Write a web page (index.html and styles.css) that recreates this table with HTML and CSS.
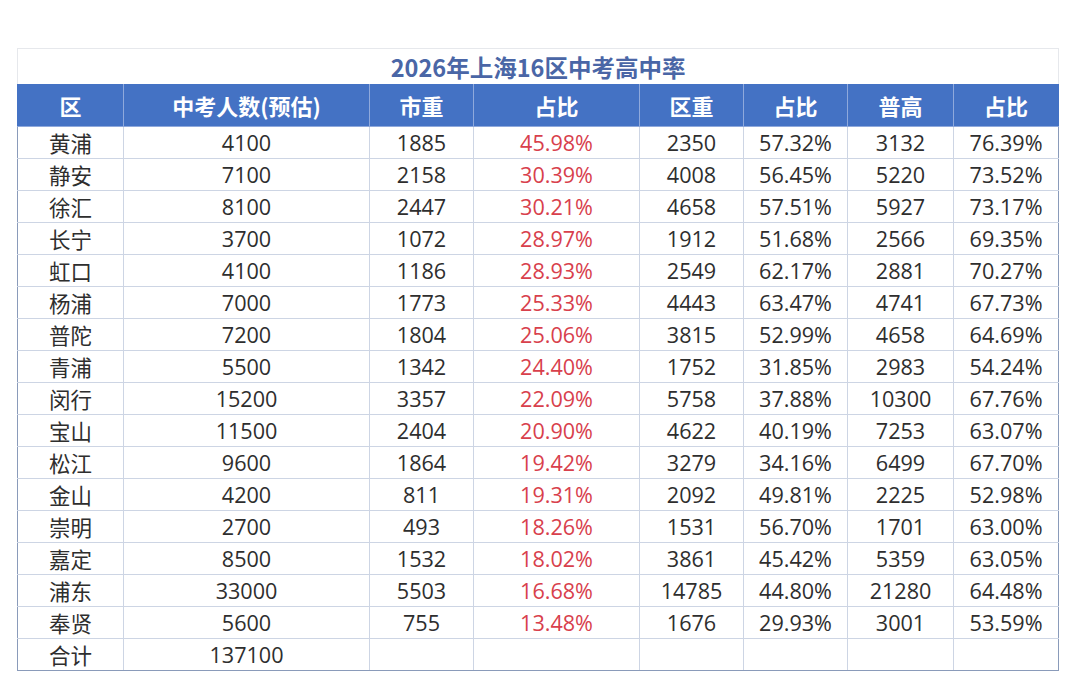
FILE: index.html
```html
<!DOCTYPE html>
<html lang="zh">
<head>
<meta charset="utf-8">
<title>2026年上海16区中考高中率</title>
<link rel="stylesheet" href="styles.css">
</head>
<body>
<div class="wrap">
<table class="sheet">
<colgroup>
<col class="w1"><col class="w2"><col class="w3"><col class="w4"><col class="w5"><col class="w6"><col class="w7"><col class="w8">
</colgroup>
<thead>
<tr class="title-row"><th colspan="8">2026年上海16区中考高中率</th></tr>
<tr class="head-row"><th>区</th><th>中考人数(预估)</th><th>市重</th><th>占比</th><th>区重</th><th>占比</th><th>普高</th><th>占比</th></tr>
</thead>
<tbody>
<tr><td>黄浦</td><td>4100</td><td>1885</td><td class="red">45.98%</td><td>2350</td><td>57.32%</td><td>3132</td><td>76.39%</td></tr>
<tr><td>静安</td><td>7100</td><td>2158</td><td class="red">30.39%</td><td>4008</td><td>56.45%</td><td>5220</td><td>73.52%</td></tr>
<tr><td>徐汇</td><td>8100</td><td>2447</td><td class="red">30.21%</td><td>4658</td><td>57.51%</td><td>5927</td><td>73.17%</td></tr>
<tr><td>长宁</td><td>3700</td><td>1072</td><td class="red">28.97%</td><td>1912</td><td>51.68%</td><td>2566</td><td>69.35%</td></tr>
<tr><td>虹口</td><td>4100</td><td>1186</td><td class="red">28.93%</td><td>2549</td><td>62.17%</td><td>2881</td><td>70.27%</td></tr>
<tr><td>杨浦</td><td>7000</td><td>1773</td><td class="red">25.33%</td><td>4443</td><td>63.47%</td><td>4741</td><td>67.73%</td></tr>
<tr><td>普陀</td><td>7200</td><td>1804</td><td class="red">25.06%</td><td>3815</td><td>52.99%</td><td>4658</td><td>64.69%</td></tr>
<tr><td>青浦</td><td>5500</td><td>1342</td><td class="red">24.40%</td><td>1752</td><td>31.85%</td><td>2983</td><td>54.24%</td></tr>
<tr><td>闵行</td><td>15200</td><td>3357</td><td class="red">22.09%</td><td>5758</td><td>37.88%</td><td>10300</td><td>67.76%</td></tr>
<tr><td>宝山</td><td>11500</td><td>2404</td><td class="red">20.90%</td><td>4622</td><td>40.19%</td><td>7253</td><td>63.07%</td></tr>
<tr><td>松江</td><td>9600</td><td>1864</td><td class="red">19.42%</td><td>3279</td><td>34.16%</td><td>6499</td><td>67.70%</td></tr>
<tr><td>金山</td><td>4200</td><td>811</td><td class="red">19.31%</td><td>2092</td><td>49.81%</td><td>2225</td><td>52.98%</td></tr>
<tr><td>崇明</td><td>2700</td><td>493</td><td class="red">18.26%</td><td>1531</td><td>56.70%</td><td>1701</td><td>63.00%</td></tr>
<tr><td>嘉定</td><td>8500</td><td>1532</td><td class="red">18.02%</td><td>3861</td><td>45.42%</td><td>5359</td><td>63.05%</td></tr>
<tr><td>浦东</td><td>33000</td><td>5503</td><td class="red">16.68%</td><td>14785</td><td>44.80%</td><td>21280</td><td>64.48%</td></tr>
<tr><td>奉贤</td><td>5600</td><td>755</td><td class="red">13.48%</td><td>1676</td><td>29.93%</td><td>3001</td><td>53.59%</td></tr>
<tr><td>合计</td><td>137100</td><td></td><td></td><td></td><td></td><td></td><td></td></tr>
</tbody>
</table>
</div>
</body>
</html>
```

FILE: styles.css
```css
html, body {
  margin: 0;
  padding: 0;
  background: #ffffff;
}
.wrap {
  padding: 48px 0 0 17px;
}
.sheet {
  border-collapse: collapse;
  table-layout: fixed;
  width: 1041px;
  font-family: "Open Sans", "Noto Sans CJK SC", sans-serif;
  font-size: 21.6px;
  color: #2e2e2e;
}
.w1 { width: 106px; }
.w2 { width: 246px; }
.w3 { width: 104px; }
.w4 { width: 166px; }
.w5 { width: 104px; }
.w6 { width: 104px; }
.w7 { width: 106px; }
.w8 { width: 105px; }
.title-row th {
  height: 35px;
  padding: 0;
  border: 1px solid #e6e8ec;
  border-bottom: none;
  font-family: "Noto Sans CJK SC", sans-serif;
  font-weight: 700;
  font-size: 23.5px;
  color: #4a66a6;
  line-height: 34px;
  text-align: center;
  vertical-align: middle;
}
.head-row th {
  height: 42px;
  padding: 0;
  background: #4472c4;
  color: #ffffff;
  font-family: "Noto Sans CJK SC", sans-serif;
  font-weight: 700;
  font-size: 22px;
  line-height: 40px;
  text-align: center;
  border-left: 1px solid #8fa9dc;
  border-right: 1px solid #8fa9dc;
  border-top: none;
  border-bottom: 1px solid #8fa9dc;
}
.head-row th:first-child { border-left: 1px solid #4472c4; }
.head-row th:last-child { border-right: 1px solid #4472c4; }
tbody td {
  height: 31px;
  padding: 0;
  text-align: center;
  vertical-align: middle;
  line-height: 30px;
  border: 1px solid #cdd5e4;
  white-space: nowrap;
}
tbody td:first-child {
  font-family: "Noto Sans CJK SC", sans-serif;
  font-size: 21.5px;
  border-left: 1px solid #8a9bba;
}
tbody td:last-child { border-right: 1px solid #8a9bba; }
tbody tr:last-child td { border-bottom: 1px solid #8a9bba; }
.red { color: #d8404c; }
```
